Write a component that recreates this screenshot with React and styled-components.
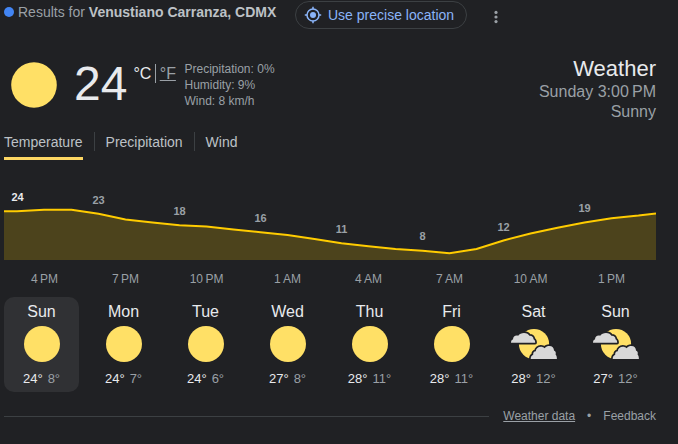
import React from "react";
import styled, { createGlobalStyle, css } from "styled-components";

const GlobalStyle = createGlobalStyle`
  * { box-sizing: border-box; }
  body {
    margin: 0;
    background: #202124;
    color: #bdc1c6;
    font-family: "Liberation Sans", Arial, sans-serif;
    overflow: hidden;
  }
`;

const Card = styled.main`
  display: flex;
  flex-direction: column;
  width: 656px;
  height: 444px;
  padding-left: 4px;
`;

const Header = styled.header`
  display: flex;
  align-items: center;
  height: 28px;
  margin-top: 1px;
`;

const LocationDot = styled.span`
  flex: none;
  width: 10px;
  height: 10px;
  margin: 0 4px 6px 0;
  border-radius: 50%;
  background: #4285f4;
`;

const LocationText = styled.span`
  flex: none;
  width: 277px;
  margin-bottom: 6px;
  font-size: 14px;
  line-height: 18px;
  white-space: nowrap;
  color: #9aa0a6;

  b { color: #bdc1c6; }
`;

const LocationButton = styled.button`
  display: flex;
  align-items: center;
  gap: 6px;
  flex: none;
  width: 172px;
  height: 28px;
  padding: 0 0 0 8px;
  border: 1px solid #3c4043;
  border-radius: 14px;
  background: transparent;
  color: #8ab4f8;
  font: 14px/18px "Liberation Sans", Arial, sans-serif;
  white-space: nowrap;
`;

const MenuIcon = styled.svg`
  flex: none;
  margin: 4px 0 0 20px;
`;

const Summary = styled.section`
  display: flex;
  height: 91px;
  margin-top: 24px;
`;

const MainIcon = styled.svg`
  flex: none;
  margin-left: -2px;
`;

const Degrees = styled.div`
  margin: 3px 0 0 8px;
  font-size: 48px;
  line-height: 55px;
  color: #e8eaed;
`;

const Units = styled.div`
  display: flex;
  margin: 11px 0 0 6px;
  height: 19px;
  font-size: 16px;
  line-height: 20px;
  color: #e8eaed;
`;

const UnitLink = styled.span`
  height: 19px;
  margin-left: 4px;
  padding-left: 3.4px;
  border-left: 1px solid #9aa0a6;
  color: #9aa0a6;
  text-decoration: underline;
`;

const Conditions = styled.div`
  margin: 8px 0 0 8.6px;
  font-size: 12px;
  line-height: 16px;
  color: #9aa0a6;
`;

const Heading = styled.div`
  margin: 2px 0 0 auto;
  text-align: right;
  font-size: 16px;
  line-height: 20px;
  color: #9aa0a6;
`;

const Title = styled.h1`
  margin: 0;
  font-size: 22px;
  font-weight: 400;
  line-height: 27px;
  color: #e8eaed;
`;

const Tabs = styled.nav`
  display: flex;
  height: 28px;
  margin-top: -12px;
`;

const Tab = styled.span`
  height: 28px;
  font-size: 14px;
  line-height: 20px;
  color: #bdc1c6;
  border-bottom: 3px solid ${(p) => (p.$active ? "#fdd663" : "transparent")};
`;

const TabDivider = styled.span`
  width: 1px;
  height: 19px;
  margin: 0 10.8px 0 11.2px;
  background: #3c4043;
`;

const Chart = styled.svg`
  display: block;
  flex: none;
  margin-top: 20px;
`;

const ChartValue = styled.text`
  font-size: 11px;
  font-weight: 700;
  text-anchor: middle;
  fill: ${(p) => (p.$active ? "#e8eaed" : "#9aa0a6")};
`;

const Hours = styled.div`
  display: grid;
  grid-template-columns: repeat(8, 81px);
  height: 14px;
  margin-top: 12px;
  font-size: 12px;
  line-height: 14px;
  text-align: center;
  color: #9aa0a6;
`;

const Days = styled.section`
  display: flex;
  gap: 7px;
  margin-top: 11px;
`;

const DayTile = styled.div`
  display: flex;
  flex-direction: column;
  align-items: center;
  flex: none;
  width: 75px;
  height: 95px;
  padding-top: 6px;
  border-radius: 10px;
  ${(p) => p.$active && css`background: #303134;`}
`;

const DayName = styled.div`
  font-size: 16px;
  line-height: 18px;
  color: #e8eaed;
`;

const DayIcon = styled.svg`
  display: block;
  margin: -1px 0 3px 1px;
`;

const Range = styled.div`
  display: flex;
  gap: 5px;
  width: 37px;
  justify-content: center;
  font-size: 13px;
  line-height: 15px;
  white-space: nowrap;
  color: #e8eaed;
`;

const Low = styled.span`
  color: #9aa0a6;
`;

const Footer = styled.footer`
  display: flex;
  align-items: center;
  height: 16px;
  margin-top: 16px;
  font-size: 12px;
  line-height: 16px;
  color: #9aa0a6;
`;

const Rule = styled.span`
  flex: 1;
  height: 1px;
  margin-right: 14px;
  background: #3c4043;
`;

const DataLink = styled.span`
  text-decoration: underline;
`;

const Bullet = styled.span`
  margin: 0 12px;
`;

const curve = [
  [0, 31.2], [13, 31.2], [40, 29.7], [67.5, 29.7], [94.5, 33.8], [121.5, 39.5],
  [148.5, 42.5], [175.5, 45.3], [202.5, 46.5], [229.5, 49.5], [256.5, 52.2],
  [283.5, 55], [310.5, 59], [337.5, 63.3], [364.5, 66.3], [391.5, 69],
  [418.5, 70.7], [445.5, 73.2], [472.5, 69], [499.5, 60.5], [526.5, 53.5],
  [553.5, 47.8], [580.5, 42.5], [607.5, 38.2], [634.5, 35.6], [652, 33.4],
];

const values = [
  [13.5, 21, "24"], [94.5, 24, "23"], [175.5, 35, "18"], [256.5, 42, "16"],
  [337.5, 53, "11"], [418.5, 60, "8"], [499.5, 51, "12"], [580.5, 32, "19"],
];

const hours = ["4", "7", "10", "1", "4", "7", "10", "1"].map(
  (h, i) => `${h}\u202f${i < 3 || i === 7 ? "PM" : "AM"}`
);

const days = [
  ["Sun", 24, 8], ["Mon", 24, 7], ["Tue", 24, 6], ["Wed", 27, 8],
  ["Thu", 28, 11], ["Fri", 28, 11], ["Sat", 28, 12, true], ["Sun", 27, 12, true],
];

const points = curve.map((p) => p.join(",")).join(" ");

const smallCloud =
  "M1 22.7 C1 21 1.6 19.6 3 19.4 C3 16.4 5.6 14.9 8.2 15.8 C9.4 13.8 11.6 12.9 14 12.9 C16.8 12.9 18.6 14 19.4 15.8 C21.8 15.6 23.6 17 23.5 19.2 C24.7 19.8 25.2 21 25.2 22.7 Z";
const largeCloud =
  "M20.7 39 C20.7 37 21.5 35.4 23.2 34.8 C22.9 32.8 24 31.4 25.8 31.2 C26 28.4 28.2 26.8 30.8 26.8 C32.4 26.8 33.7 27.4 34.6 28.2 C35.8 26.6 37.6 26 39.4 26 C42.2 26 44 27.8 44 30.6 C45.7 31.4 46.1 32.8 45.6 34.4 C46.7 35.4 46.9 37.2 46.9 39 Z";

function Sun() {
  return (
    <DayIcon width="48" height="48" viewBox="0 0 48 48">
      <circle cx="24" cy="24" r="18" fill="#ffe066" />
    </DayIcon>
  );
}

function PartlyCloudy() {
  return (
    <DayIcon width="48" height="48" viewBox="0 0 48 48">
      <circle cx="24" cy="24" r="15.1" fill="#ffe066" />
      {[smallCloud, largeCloud].map((d) => (
        <g key={d}>
          <path d={d} fill="none" stroke="#202124" strokeWidth="3.4" strokeLinejoin="round" />
          <path d={d} fill="#d8d8d8" />
        </g>
      ))}
    </DayIcon>
  );
}

export default function App() {
  return (
    <Card>
      <GlobalStyle />
      <Header>
        <LocationDot />
        <LocationText>
          Results for <b>Venustiano Carranza, CDMX</b>
        </LocationText>
        <LocationButton>
          <svg width="18" height="18" viewBox="0 0 18 18" fill="none" stroke="#8ab4f8" strokeWidth="1.5">
            <circle cx="9" cy="9" r="6" />
            <circle cx="9" cy="9" r="3" fill="#8ab4f8" stroke="none" />
            <path d="M9 .8v2.4M9 14.8v2.4M.8 9h2.4M14.8 9h2.4" />
          </svg>
          Use precise location
        </LocationButton>
        <MenuIcon width="18" height="18" viewBox="0 0 18 18" fill="#9aa0a6">
          <circle cx="9" cy="4.4" r="1.6" />
          <circle cx="9" cy="9" r="1.6" />
          <circle cx="9" cy="13.6" r="1.6" />
        </MenuIcon>
      </Header>

      <Summary>
        <MainIcon width="64" height="64" viewBox="0 0 64 64">
          <circle cx="32" cy="32" r="22.8" fill="#ffe066" />
        </MainIcon>
        <Degrees>24</Degrees>
        <Units>
          °C<UnitLink>°F</UnitLink>
        </Units>
        <Conditions>
          <div>Precipitation: 0%</div>
          <div>Humidity: 9%</div>
          <div>Wind: 8 km/h</div>
        </Conditions>
        <Heading>
          <Title>Weather</Title>
          <div>Sunday 3:00{"\u202f"}PM</div>
          <div>Sunny</div>
        </Heading>
      </Summary>

      <Tabs>
        <Tab $active>Temperature</Tab>
        <TabDivider />
        <Tab>Precipitation</Tab>
        <TabDivider />
        <Tab>Wind</Tab>
      </Tabs>

      <Chart width="652" height="80" viewBox="0 0 652 80">
        <polygon points={`0,80 ${points} 652,80`} fill="#ffcc00" fillOpacity="0.2" />
        <polyline points={points} fill="none" stroke="#ffcc00" strokeWidth="2" />
        {values.map(([x, y, label], i) => (
          <ChartValue key={x} x={x} y={y} $active={i === 0}>
            {label}
          </ChartValue>
        ))}
      </Chart>
      <Hours>
        {hours.map((hour, i) => (
          <span key={i}>{hour}</span>
        ))}
      </Hours>

      <Days>
        {days.map(([name, high, low, cloudy], i) => (
          <DayTile key={i} $active={i === 0}>
            <DayName>{name}</DayName>
            {cloudy ? <PartlyCloudy /> : <Sun />}
            <Range>
              <span>{high}°</span>
              <Low>{low}°</Low>
            </Range>
          </DayTile>
        ))}
      </Days>

      <Footer>
        <Rule />
        <DataLink>Weather data</DataLink>
        <Bullet>•</Bullet>
        <span>Feedback</span>
      </Footer>
    </Card>
  );
}
